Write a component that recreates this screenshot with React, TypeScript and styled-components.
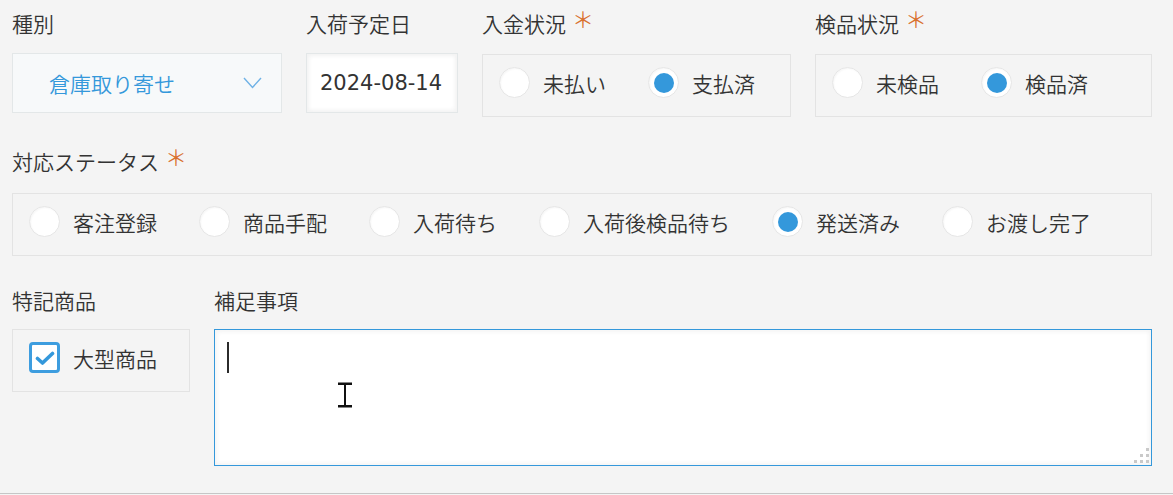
import React from "react";
import styled, { createGlobalStyle } from "styled-components";

const GlobalStyle = createGlobalStyle`
  html, body {
    margin: 0;
    padding: 0;
    background: #f4f4f4;
  }
  body {
    font-family: "Noto Sans CJK JP", "Noto Sans", sans-serif;
    font-weight: 350;
    color: #333;
  }
  * { box-sizing: border-box; }
`;

const Page = styled.div`
  width: 1173px;
  height: 494px;
  padding: 8px 12px 0;
  border-bottom: 1px solid #c6c6c6;
  background: #f4f4f4;
  overflow: hidden;
`;

const Row = styled.div<{ $mt?: number }>`
  display: flex;
  align-items: flex-start;
  gap: 24px;
  margin-top: ${(p) => p.$mt ?? 0}px;
`;

const Field = styled.div`
  display: flex;
  flex-direction: column;
`;

const Label = styled.div<{ $gap: number }>`
  height: 30px;
  line-height: 30px;
  font-size: 21px;
  color: #333;
  white-space: nowrap;
  margin-bottom: ${(p) => p.$gap}px;
`;

const Required = styled.span`
  display: inline-block;
  margin-left: 6px;
  color: #d9712e;
  font-size: 22px;
  line-height: 0;
  vertical-align: 4px;
`;

const SelectBox = styled.div`
  width: 270px;
  height: 60px;
  display: flex;
  align-items: center;
  justify-content: space-between;
  padding: 0 19px 0 36px;
  background: #f7f9fa;
  border: 1px solid #e3e7e8;
  color: #3498db;
  font-size: 21px;
`;

const DateInput = styled.input`
  width: 152px;
  height: 60px;
  padding: 0 0 0 13px;
  border: 1px solid #e3e7e8;
  background: #fff;
  box-shadow: inset 2px 2px 4px #f2f2f2, inset -2px -2px 4px #f2f2f2;
  font-family: "DejaVu Sans", "Noto Sans CJK JP", sans-serif;
  font-size: 21px;
  color: #333;
  outline: none;
`;

const GroupBox = styled.div<{ $w: number; $mt?: number }>`
  width: ${(p) => p.$w}px;
  height: 63px;
  margin-top: ${(p) => p.$mt ?? 0}px;
  display: flex;
  align-items: flex-start;
  padding: 12px 0 0 16px;
  border: 1px solid #e3e3e3;
`;

const RadioItem = styled.label`
  display: flex;
  align-items: center;
  margin-right: 42px;
  font-size: 21px;
  line-height: 30px;
  color: #333;
  white-space: nowrap;
`;

const RadioCircle = styled.span<{ $checked?: boolean }>`
  width: 31px;
  height: 31px;
  flex: none;
  border-radius: 50%;
  background: #fff;
  border: 1px solid #e6e6e6;
  box-shadow: inset 1px 1px 2px rgba(0, 0, 0, 0.04);
  display: flex;
  align-items: center;
  justify-content: center;
  margin-right: 13px;

  &::after {
    content: "";
    display: ${(p) => (p.$checked ? "block" : "none")};
    width: 20px;
    height: 20px;
    border-radius: 50%;
    background: #3498db;
  }
`;

const CheckSquare = styled.span`
  width: 31px;
  height: 31px;
  flex: none;
  border: 3px solid #3d9ddf;
  border-radius: 4px;
  background: #fff;
  display: flex;
  align-items: center;
  justify-content: center;
  margin-right: 13px;
`;

const NoteWrap = styled.div`
  position: relative;
  width: 938px;
  height: 137px;
`;

const NoteArea = styled.textarea`
  display: block;
  width: 100%;
  height: 100%;
  resize: none;
  border: 1px solid #3498db;
  background: #fff;
  box-shadow: inset 2px 2px 4px #f4f4f4, inset -2px -2px 4px #f4f4f4;
  outline: none;
  font-family: "Noto Sans CJK JP", sans-serif;
  font-size: 21px;
  padding: 10px 12px;
`;

const Caret = styled.span`
  position: absolute;
  left: 13px;
  top: 13px;
  width: 2px;
  height: 31px;
  background: #2b2b2b;
`;

const MouseCursor = styled.svg`
  position: absolute;
  left: 123px;
  top: 53px;
`;

const Grip = styled.svg`
  position: absolute;
  right: 3px;
  bottom: 3px;
`;

type Opt = { label: string; checked?: boolean };

function RadioGroup({ width, mt, options }: { width: number; mt?: number; options: Opt[] }) {
  return (
    <GroupBox $w={width} $mt={mt}>
      {options.map((o) => (
        <RadioItem key={o.label}>
          <RadioCircle $checked={o.checked} />
          {o.label}
        </RadioItem>
      ))}
    </GroupBox>
  );
}

export default function App() {
  return (
    <>
      <GlobalStyle />
      <Page>
        <Row>
          <Field>
            <Label $gap={15}>種別</Label>
            <SelectBox>
              <span>倉庫取り寄せ</span>
              <svg width="19" height="12" viewBox="0 0 19 12">
                <polyline
                  points="1,1 9.5,10.5 18,1"
                  fill="none"
                  stroke="#6fb2e6"
                  strokeWidth="1.4"
                />
              </svg>
            </SelectBox>
          </Field>
          <Field>
            <Label $gap={15}>入荷予定日</Label>
            <DateInput readOnly value="2024-08-14" />
          </Field>
          <Field>
            <Label $gap={15}>
              入金状況<Required>＊</Required>
            </Label>
            <RadioGroup
              width={309}
              mt={1}
              options={[{ label: "未払い" }, { label: "支払済", checked: true }]}
            />
          </Field>
          <Field>
            <Label $gap={15}>
              検品状況<Required>＊</Required>
            </Label>
            <RadioGroup
              width={337}
              mt={1}
              options={[{ label: "未検品" }, { label: "検品済", checked: true }]}
            />
          </Field>
        </Row>

        <Row $mt={29}>
          <Field>
            <Label $gap={17}>
              対応ステータス<Required>＊</Required>
            </Label>
            <RadioGroup
              width={1140}
              options={[
                { label: "客注登録" },
                { label: "商品手配" },
                { label: "入荷待ち" },
                { label: "入荷後検品待ち" },
                { label: "発送済み", checked: true },
                { label: "お渡し完了" },
              ]}
            />
          </Field>
        </Row>

        <Row $mt={29}>
          <Field>
            <Label $gap={14}>特記商品</Label>
            <GroupBox $w={178}>
              <RadioItem>
                <CheckSquare>
                  <svg width="20" height="16" viewBox="0 0 20 16">
                    <polyline
                      points="2.5,8.5 7.5,13 17.5,3.5"
                      fill="none"
                      stroke="#3498db"
                      strokeWidth="3.6"
                      strokeLinecap="round"
                      strokeLinejoin="round"
                    />
                  </svg>
                </CheckSquare>
                大型商品
              </RadioItem>
            </GroupBox>
          </Field>
          <Field>
            <Label $gap={14}>補足事項</Label>
            <NoteWrap>
              <NoteArea readOnly />
              <Caret />
              <MouseCursor width="16" height="26" viewBox="0 0 16 26">
                <path
                  d="M1 1.5 H6.5 V24.5 H1 M15 1.5 H9.5 V24.5 H15 M6.5 1.5 H9.5 M6.5 24.5 H9.5"
                  fill="none"
                  stroke="#fff"
                  strokeWidth="3"
                />
                <rect x="1" y="0.5" width="14" height="2.5" fill="#111" />
                <rect x="1" y="23" width="14" height="2.5" fill="#111" />
                <rect x="7" y="2" width="2" height="22" fill="#111" />
              </MouseCursor>
              <Grip width="15" height="15" viewBox="0 0 15 15">
                <rect x="12" y="0" width="3" height="3" fill="#c9c9c9" />
                <rect x="6" y="6" width="3" height="3" fill="#c9c9c9" />
                <rect x="12" y="6" width="3" height="3" fill="#c9c9c9" />
                <rect x="0" y="12" width="3" height="3" fill="#c9c9c9" />
                <rect x="6" y="12" width="3" height="3" fill="#c9c9c9" />
                <rect x="12" y="12" width="3" height="3" fill="#c9c9c9" />
              </Grip>
            </NoteWrap>
          </Field>
        </Row>
      </Page>
    </>
  );
}
